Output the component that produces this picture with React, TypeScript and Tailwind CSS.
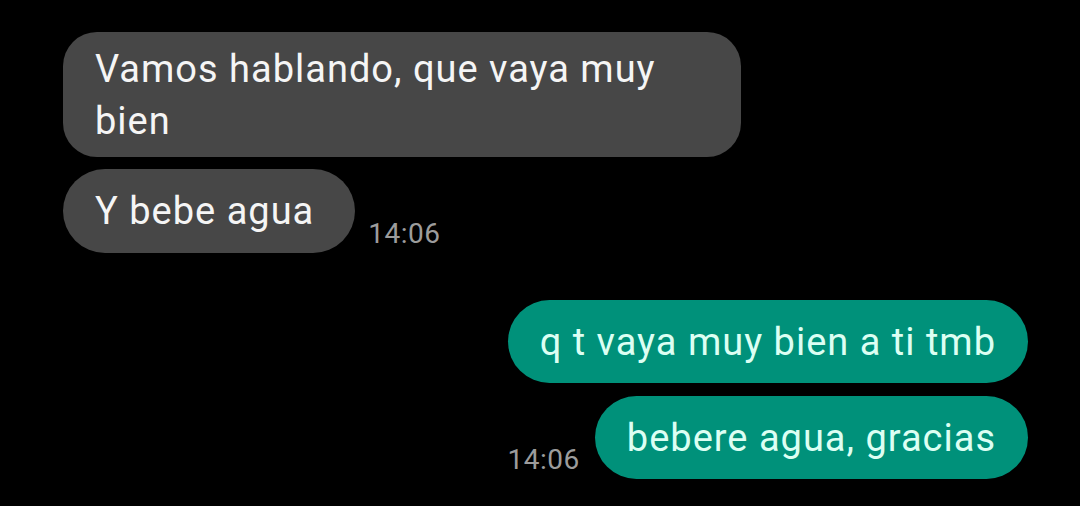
export default function App() {
  return (
    <div className="w-[1080px] h-[506px] overflow-hidden bg-black font-['Roboto',sans-serif]">
      <div className="flex flex-col pt-[32px] pl-[63px] pr-[52px]">
        {/* incoming */}
        <div className="flex flex-col items-start gap-[12px]">
          <div className="w-[678px] rounded-[34px] bg-[#474747] px-[32px] pt-[11px] pb-[10px] text-[38px] leading-[52px] tracking-[1px] text-[#f5f5f5]">
            Vamos hablando, que vaya muy
            <br />
            bien
          </div>
          <div className="flex items-end gap-[13px]">
            <div className="rounded-full bg-[#474747] pl-[32px] pr-[41px] py-[16px] text-[38px] leading-[52px] tracking-[1px] text-[#f5f5f5]">
              Y bebe agua
            </div>
            <span className="mb-[3px] text-[28px] leading-[32px] tracking-[0.5px] text-[#9c9c9c]">14:06</span>
          </div>
        </div>

        {/* outgoing */}
        <div className="mt-[47px] flex flex-col items-end gap-[13px]">
          <div className="rounded-full bg-[#00917a] px-[32px] pt-[16px] pb-[15px] text-[38px] leading-[52px] tracking-[1px] text-[#dcfff3]">
            q t vaya muy bien a ti tmb
          </div>
          <div className="flex items-end gap-[15px]">
            <span className="mb-[3px] text-[28px] leading-[32px] tracking-[0.5px] text-[#9c9c9c]">14:06</span>
            <div className="rounded-full bg-[#00917a] px-[32px] pt-[16px] pb-[15px] text-[38px] leading-[52px] tracking-[1px] text-[#dcfff3]">
              bebere agua, gracias
            </div>
          </div>
        </div>
      </div>
    </div>
  );
}
